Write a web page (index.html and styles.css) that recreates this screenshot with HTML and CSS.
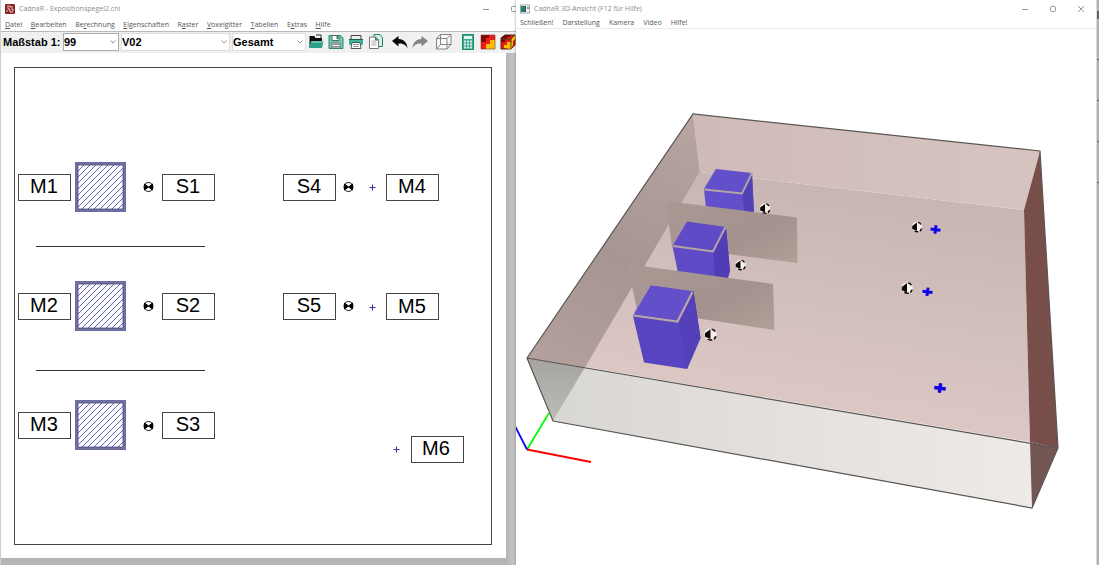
FILE: index.html
```html
<!DOCTYPE html>
<html lang="de">
<head>
<meta charset="utf-8">
<title>CadnaR</title>
<link rel="stylesheet" href="styles.css">
</head>
<body>
<main class="desktop">
  <section class="window window-plan">
    <header class="titlebar">
      <svg class="app-icon" viewBox="0 0 10 10" aria-hidden="true"><rect width="10" height="10" rx="1" fill="#8b2226"/><path d="M2 2h3v1h3M2 4h2v2h1v2h3M2 8V6M6 5h2v2" fill="none" stroke="#e9c9c9"/></svg>
      <h1 class="title">CadnaR - Expositionspegel2.cni</h1>
      <div class="window-buttons plan-buttons">
        <button class="window-button" aria-label="Minimieren"><svg viewBox="0 0 8 8"><path d="M1 4.500h6"/></svg></button>
        <button class="window-button" aria-label="Maximieren"><svg viewBox="0 0 8 8"><rect x="1.500" y="1.500" width="5" height="5" rx="1"/></svg></button>
      </div>
    </header>
    <nav class="menubar menubar-plan">
      <a href="#"><u>D</u>atei</a><a href="#"><u>B</u>earbeiten</a><a href="#">Be<u>r</u>echnung</a><a href="#"><u>E</u>igenschaften</a><a href="#">R<u>a</u>ster</a><a href="#"><u>V</u>oxelgitter</a><a href="#"><u>T</u>abellen</a><a href="#">E<u>x</u>tras</a><a href="#"><u>H</u>ilfe</a>
    </nav>
    <div class="toolbar">
      <label class="scale-label" for="scale">Maßstab 1:</label>
      <select class="combo combo-scale" id="scale"><option>99</option></select>
      <select class="combo combo-variant" aria-label="Variante"><option>V02</option></select>
      <select class="combo combo-total" aria-label="Auswertung"><option>Gesamt</option></select>
      <div class="tool-groups">
        <div class="tools">
          <button class="tool" aria-label="Öffnen"><svg viewBox="0 0 16 16"><path d="M1.500 13V2h5l1 2H14v9z" fill="#111"/><path d="M8 1h5v3" fill="#fff" stroke="#222"/><path d="M3 7h12.500L14 14H1z" fill="#2aa287"/><path d="M3.500 8H15" stroke="#a6dccb"/></svg></button>
          <button class="tool" aria-label="Speichern"><svg viewBox="0 0 16 16"><path d="M1 1.500h11.500l2.500 2.500v10.500H1z" fill="#72c9b0" stroke="#258d76"/><path d="M4 1.500h7v5H4z" fill="#fff" stroke="#5a6864"/><path d="M8.500 2h2v3h-2z" fill="#258d76"/><path d="M4 9h8v5H4z" fill="#fff" stroke="#666"/><path d="M5 10.500h6M5 12.500h6" stroke="#888"/></svg></button>
          <button class="tool" aria-label="Drucken"><svg viewBox="0 0 16 16"><path d="M3 5V1.500h10V5" fill="#eee" stroke="#444"/><path d="M1 5h14v6H1z" fill="#3fb398"/><path d="M1 5.500h14" stroke="#1c5a4c"/><path d="M4 8.500h8l1 6H3z" fill="#fff" stroke="#4a5a56"/><path d="M5 10.500h6M5 12.500h6" stroke="#999"/></svg></button>
          <button class="tool" aria-label="Kopieren"><svg viewBox="0 0 16 16"><path d="M6 .5h6l2.500 3v9H6z" fill="#d5eee7" stroke="#25836f"/><path d="M1.500 3h6l3 3v8.500h-9z" fill="#fff" stroke="#777"/><path d="M7.500 3v3h3" fill="#2fa58b" stroke="#666"/><path d="M3.500 7h5M3.500 9h5M3.500 11h5" stroke="#aaa"/></svg></button>
        </div>
        <div class="tools">
          <button class="tool" aria-label="Rückgängig"><svg viewBox="0 0 16 16"><path d="M0 7l6.500-5v3C11 5 15 8 15.500 14 13 10 10 9.500 6.500 9.500v3z" fill="#050505"/></svg></button>
          <button class="tool" aria-label="Wiederholen"><svg viewBox="0 0 16 16"><path d="M16 7L9.500 2v3C5 5 1 8 .5 14 3 10 6 9.500 9.500 9.500v3z" fill="#858585"/></svg></button>
        </div>
        <div class="tools">
          <button class="tool" aria-label="3D-Ansicht"><svg viewBox="0 0 16 16" fill="none" stroke="#858585"><path d="M.5 4.500h10.500v10.500H.5zM4.500.5h10.500v10H4.500z" fill="#fff" fill-opacity=".6"/><path d="M.5 4.500l4-4M11 4.500l4-4M11 15l4-4.500M.5 15l4-4.500"/></svg></button>
        </div>
        <div class="tools">
          <button class="tool" aria-label="Rechner"><svg viewBox="0 0 16 16"><rect x="2.500" y=".5" width="11" height="15" fill="#3ca890" stroke="#238a72"/><path d="M4 2h8v3H4z" fill="#e2f4ef"/><path d="M4 7.500h8M4 10.500h8M4 13.500h8" stroke="#d5efe8" stroke-width="2" stroke-dasharray="2 1"/></svg></button>
          <button class="tool" aria-label="Raster"><svg viewBox="0 0 16 16"><path d="M1 1h14v14H1z" fill="#ffbd00"/><path d="M1 1h14v5h-5v4H6v5H1z" fill="#ed1c16"/><path d="M1 1h8v3H6v4H1z" fill="#82080b"/><path d="M1 1h14v14H1z" fill="none" stroke="#7a3a2a" stroke-width=".6"/></svg></button>
          <button class="tool" aria-label="Voxelgitter"><svg viewBox="0 0 16 16"><path d="M1 4l4-3h10v10l-4 4H1z" fill="#e31912" stroke="#431"/><path d="M5 1h5v2H7v2H1V4zM1 5h4v3H1z" fill="#710508"/><path d="M4 14v-3h3V8h4V5l4-4v4l-2 2v4l-2 4z" fill="#ffbe00"/><path d="M11 5v10M11 5l4-4M1 5h10" stroke="#541" fill="none"/></svg></button>
        </div>
      </div>
    </div>
    <div class="workspace">
      <svg class="plan" viewBox="1 53 505 505" preserveAspectRatio="xMinYMin meet">
        <defs>
          <pattern id="hatch" width="6" height="6" patternUnits="userSpaceOnUse"><path d="M-1 7L7-1M-1 1l2-2M5 7l2-2" stroke="#5252b4" stroke-width=".9"/></pattern>
          <g id="machine"><rect x="1.500" y="1.500" width="48" height="47" fill="url(#hatch)" stroke="#74748f" stroke-width="3"/><rect x=".5" y=".5" width="50" height="49" fill="none" stroke="#6a6ab4"/><path d="M3 47V3h45M48 3v44H3" fill="none" stroke="#44448c" stroke-width=".8"/></g>
          <g id="receiver"><circle r="4.500" fill="#fff" stroke="#111"/><path d="M0 0L-4-3v6zM0 0l4-3v6z" fill="#000" stroke="#000"/></g>
          <path id="point" d="M-3 0h6M0-3v6" stroke="#3333a0"/>
          <rect id="tag" width="52" height="26" fill="#fff" stroke="#444"/>
        </defs>
        <rect x="14.500" y="67.500" width="477" height="477" fill="#fff" stroke="#444"/>
        <path d="M36 246.500h169M36 370.500h169" stroke="#333"/>
        <use href="#machine" x="75" y="162"/><use href="#machine" x="75" y="281"/><use href="#machine" x="75" y="400"/>
        <use href="#receiver" x="148.500" y="187"/><use href="#receiver" x="148.500" y="306"/><use href="#receiver" x="148.500" y="426"/><use href="#receiver" x="348.500" y="187"/><use href="#receiver" x="348.500" y="306"/>
        <use href="#point" x="372.500" y="187.500"/><use href="#point" x="372.500" y="307.500"/><use href="#point" x="396.500" y="449.500"/>
        <use href="#tag" x="18.500" y="174.500"/><use href="#tag" x="18.500" y="293.500"/><use href="#tag" x="18.500" y="412.500"/>
        <use href="#tag" x="162.500" y="174.500"/><use href="#tag" x="162.500" y="293.500"/><use href="#tag" x="162.500" y="412.500"/>
        <use href="#tag" x="283.500" y="174.500"/><use href="#tag" x="283.500" y="293.500"/>
        <use href="#tag" x="386.500" y="174.500"/><use href="#tag" x="386.500" y="293.500"/><use href="#tag" x="411.500" y="436.500"/>
        <g class="tag-text">
          <text x="44" y="193">M1</text><text x="44" y="312">M2</text><text x="44" y="431">M3</text>
          <text x="188" y="193">S1</text><text x="188" y="312">S2</text><text x="188" y="431">S3</text>
          <text x="309" y="193">S4</text><text x="309" y="312">S5</text>
          <text x="412" y="193">M4</text><text x="412" y="313">M5</text><text x="436" y="455">M6</text>
        </g>
      </svg>
    </div>
  </section>

  <section class="window window-view">
    <header class="titlebar">
      <svg class="app-icon" viewBox="0 0 10 10" aria-hidden="true"><rect x=".5" y="1" width="9" height="8" fill="#f5f8f8" stroke="#a0aaae"/><path d="M1 2h4v6H1z" fill="#2d8068"/><path d="M5 2h1v6H5z" fill="#28476b"/><path d="M7 3h2v2H7z" fill="#88a"/></svg>
      <h2 class="title">CadnaR 3D-Ansicht (F12 für Hilfe)</h2>
      <div class="window-buttons view-buttons">
        <button class="window-button" aria-label="Minimieren"><svg viewBox="0 0 8 8"><path d="M1 4.500h6"/></svg></button>
        <button class="window-button" aria-label="Maximieren"><svg viewBox="0 0 8 8"><rect x="1.500" y="1.500" width="5" height="5" rx="1"/></svg></button>
        <button class="window-button" aria-label="Schließen"><svg viewBox="0 0 8 8"><path d="M1 1l6 6M7 1L1 7"/></svg></button>
      </div>
    </header>
    <nav class="menubar menubar-view">
      <a href="#">Schließen!</a><a href="#">Darstellung</a><a href="#">Kamera</a><a href="#">Video</a><a href="#">Hilfe!</a>
    </nav>
    <svg class="scene" viewBox="516 29 580 536" preserveAspectRatio="xMinYMin meet">
      <defs>
        <linearGradient id="floor" gradientUnits="userSpaceOnUse" x1="820" y1="190" x2="780" y2="440"><stop stop-color="#c9b6b4"/><stop offset=".55" stop-color="#d5c1bd"/><stop offset="1" stop-color="#e0cac7"/></linearGradient>
        <linearGradient id="back" x1="0" y1="0" x2="1" y2="0"><stop stop-color="#cfbab8"/><stop offset="1" stop-color="#d7c4c1"/></linearGradient>
        <linearGradient id="side" gradientUnits="userSpaceOnUse" x1="700" y1="120" x2="545" y2="400"><stop stop-color="#b8a5a2"/><stop offset=".5" stop-color="#a69592"/><stop offset="1" stop-color="#b7a29e"/></linearGradient>
        <linearGradient id="front" x1="0" y1="0" x2="1" y2="0"><stop stop-color="#d9d7d4"/><stop offset="1" stop-color="#eeebe7"/></linearGradient>
        <linearGradient id="front-side" x1="0" y1="0" x2="0" y2="1"><stop stop-color="#a5a4a0"/><stop offset="1" stop-color="#bcbbb7"/></linearGradient>
        <linearGradient id="screen" x1="0" y1="0" x2="1" y2="1"><stop stop-color="#aa9993"/><stop offset=".6" stop-color="#a3928d"/><stop offset="1" stop-color="#b19f99"/></linearGradient>
        <g id="marker"><circle r="5.300" fill="#fbeeed"/><path d="M0-4.500L-4.800-1V2L0 4z" fill="#0b0808"/><path d="M-2.500 4Q0 5.300 1.500 4.500M1-4.600Q3-4.400 4-2.500M4.600 1.500Q4 3.500 2.800 4" fill="none" stroke="#0b0808" stroke-width="1.400"/></g>
        <path id="cross" d="M-5-.5L5 .8M.6-4.200L-.6 4.200" stroke="#1204e6" stroke-width="3"/>
      </defs>
      <path d="M700 172L1024 210 1030 442 585 367z" fill="url(#floor)"/>
      <path d="M693 114L1040 151 1024 210 700 172z" fill="url(#back)"/>
      <path d="M693 114L700 172 585 367.500 527 358z" fill="url(#side)"/>
      <path d="M585 367.500L1030 442 1032 508 553 421z" fill="url(#front)"/>
      <path d="M527 358L585 367.500 553 421z" fill="url(#front-side)"/>
      <path d="M1040 151L1058 448 1030 442 1024 210z" fill="#784e4b"/>
      <path d="M1030 442L1058 448 1032 508z" fill="#735553"/>
      <path d="M527 358L693 114 1040 151 1058 448 1032 508 553 421zL1058 448" fill="none" stroke="#5b5653" stroke-width="1.200"/>
      <path d="M716 169L752 173 754 214 745 214 706 209 704 189z" fill="#624fc9"/>
      <path d="M752 173L742 193 745 214 754 214z" fill="#5240b7"/>
      <path d="M704.500 189.500L742 193.500 752 173" fill="none" stroke="#b6a5a6" stroke-width="1.800"/>
      <path d="M715 170L704 188" stroke="#a393c4" stroke-dasharray="2 1"/>
      <path d="M666 201L797 217.500 797.500 263 672 247z" fill="url(#screen)"/>
      <path d="M687 221.500L726 227 730 271 727 279 678 273 672.500 246z" fill="#604bc6"/>
      <path d="M726 227L713 251 715 278 728 278 730 271z" fill="#503db6"/>
      <path d="M673 246L713 251.500 725.500 227" fill="none" stroke="#b6a5a6" stroke-width="2"/>
      <path d="M686 222L672 244" stroke="#a393c4" stroke-dasharray="2 1"/>
      <path d="M627 264L773 284 774.500 330 637 309z" fill="url(#screen)"/>
      <path d="M651 285.500L693.500 291.500 700.500 338 687 369 644 362.500 633 316z" fill="#5844c0"/>
      <path d="M651 285.500L693.500 291.500 678 321.500 633 316z" fill="#624fc9"/>
      <path d="M693.500 291.500L700.500 338 687 369 678 321.500z" fill="#5440b8"/>
      <path d="M633.500 315.500L677.500 321.500 692.500 292" fill="none" stroke="#b9a7a8" stroke-width="2.200"/>
      <path d="M650 286L634 312" stroke="#a393c4" stroke-dasharray="2 1"/>
      <use href="#marker" x="765" y="208.500"/><use href="#marker" x="740.500" y="265"/><use href="#marker" transform="translate(710.500 334.500) scale(1.150)"/><use href="#marker" x="917" y="227"/><use href="#marker" transform="translate(907 288) scale(1.100)"/>
      <use href="#cross" x="935.500" y="229.500"/><use href="#cross" x="927.500" y="291.800"/><use href="#cross" transform="translate(940 388) scale(1.150)"/>
      <path d="M527 449.500L549 413" stroke="#0f0" stroke-width="1.800"/>
      <path d="M527 449.500L591 462" stroke="#f00" stroke-width="1.800"/>
      <path d="M527 449.500L515 426" stroke="#0808f0" stroke-width="1.800"/>
    </svg>
  </section>
  <div class="backdrop" aria-hidden="true"><i></i><i></i><i></i><i></i><i></i></div>
</main>
</body>
</html>
```
FILE: styles.css
```css
* { box-sizing: border-box; }

body {
  margin: 0;
  background: #fff;
  font-family: "Open Sans", "Noto Sans", sans-serif;
}

.desktop {
  display: grid;
  grid-template-columns: 516fr 580fr 3px;
  min-height: 100vh;
}

.window {
  display: flex;
  flex-direction: column;
  min-width: 0;
  overflow: hidden;
  background: #fff;
}

.window-plan { border-left: 1px solid #cfcdd2; }
.window-view { box-shadow: -1px 0 2px #0003; }

.titlebar {
  display: flex;
  align-items: center;
  gap: 4px;
  height: 17px;
  padding: 0 4px;
}

.app-icon { width: 10px; height: 10px; }

.title {
  margin: 0;
  color: #8d8d8d;
  font-size: 7px;
  font-weight: 400;
  line-height: 10px;
  white-space: nowrap;
}

.window-buttons { display: flex; gap: 20px; margin-left: auto; }
.plan-buttons { margin-right: -6px; }
.view-buttons { padding-right: 7px; }

.window-button {
  width: 8px;
  height: 8px;
  padding: 0;
  border: 0;
  background: none;
}

.window-button svg {
  display: block;
  width: 8px;
  height: 8px;
  fill: none;
  stroke: #999;
}

.menubar {
  display: flex;
  align-items: center;
  height: 15px;
  padding: 1px 4px 0;
  border-bottom: 1px solid #b9b9b9;
  font-size: 7px;
  line-height: 10px;
  white-space: nowrap;
}

.menubar-plan { justify-content: space-between; padding-right: 36%; }
.menubar-view { gap: 9px; height: 12px; border-bottom-color: #ececec; }
.menubar a { color: #555; text-decoration: none; }

.toolbar {
  display: flex;
  align-items: center;
  gap: 2px;
  height: 21px;
  padding: 0 0 2px 2px;
  background: #f0f0f0;
  font-family: "Liberation Sans", Arial, sans-serif;
  font-size: 11px;
  font-weight: 700;
}

.scale-label { flex: none; width: 58px; white-space: nowrap; }

.combo {
  flex: none;
  height: 18px;
  padding: 0;
  border: 1px solid #ddd;
  border-radius: 0;
  appearance: none;
  background: #fff url("data:image/svg+xml,%3Csvg xmlns='http://www.w3.org/2000/svg' viewBox='0 0 6 4'%3E%3Cpath d='M.5.5L3 3 5.500.5' fill='none' stroke='%23777' stroke-width='.8'/%3E%3C/svg%3E") no-repeat right 2px center / 6px 4px;
  color: #000;
  font: inherit;
}

.combo-scale { width: 56px; border-color: #aaa; }
.combo-variant { width: 109px; }
.combo-total { width: 74px; }

.tool-groups { display: flex; gap: 8px; }
.tools { display: flex; gap: 4px; }

.tool {
  width: 16px;
  height: 16px;
  padding: 0;
  border: 0;
  background: none;
}

.tool svg { display: block; width: 16px; height: 16px; }

.workspace {
  flex: 1;
  padding: 0 10px 7px 0;
  background: linear-gradient(90deg, #b5b5b5 98%, #c7c7c7);
}

.plan { display: block; width: 100%; background: #fff; }

.tag-text {
  font-family: "Liberation Sans", Arial, sans-serif;
  font-size: 20px;
  text-anchor: middle;
}

.scene { display: block; width: 100%; }

.backdrop {
  display: flex;
  flex-direction: column;
  justify-content: flex-start;
  gap: 40px;
  border-left: 1px solid #ddd;
  background: #b0b0b0;
}

.backdrop i { height: 1px; background: #666; }
.backdrop i:first-child { height: 8px; margin-top: 11px; }
```
